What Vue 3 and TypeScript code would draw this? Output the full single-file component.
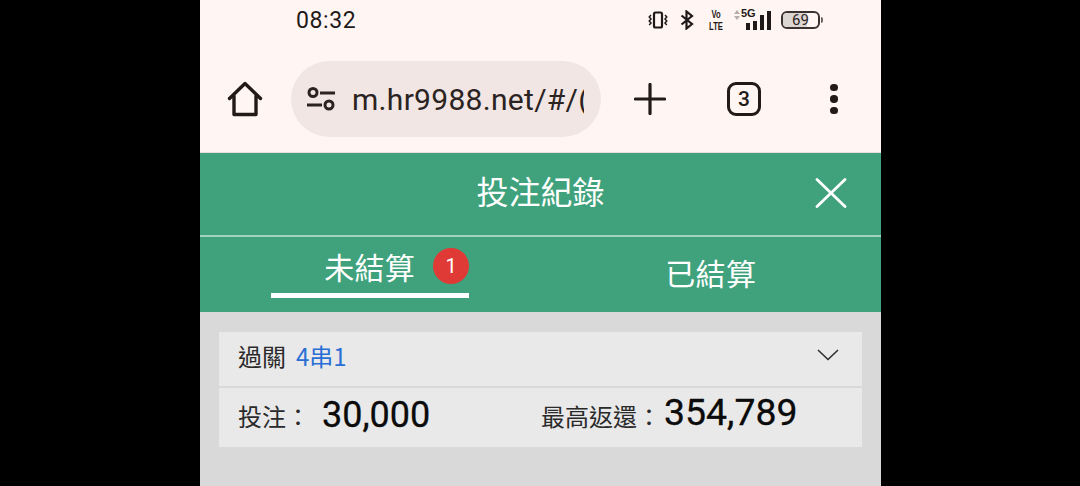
<template>
  <div class="stage">
    <div class="phone">
      <div class="status-bar">
        <span class="time">08:32</span>
        <div class="status-icons">
          <svg class="ic-vibrate" width="20" height="18" viewBox="0 0 20 18" fill="none" stroke="#1f1a19">
            <rect x="6" y="1.500" width="8" height="15" rx="1.500" stroke-width="2.200" />
            <path d="M3 4 1.200 6 3 8 1.200 10 3 12 1.200 14M17 4l1.800 2L17 8l1.800 2L17 12l1.800 2" stroke-width="1.500" />
          </svg>
          <svg class="ic-bt" width="14" height="20" viewBox="0 0 14 20" fill="none" stroke="#1f1a19" stroke-width="2.200">
            <path d="M1.500 5.500 12 14l-5.500 4.500v-17L12 6 1.500 14.500" />
          </svg>
          <div class="volte"><span>Vo</span><span>LTE</span></div>
          <div class="signal">
            <svg class="updown" width="6" height="10" viewBox="0 0 6 10" fill="#b5aeab">
              <path d="M3 0l3 4H0zM3 10 0 6h6z" />
            </svg>
            <span class="five-g">5G</span>
            <i class="bar b1"></i><i class="bar b2"></i><i class="bar b3"></i><i class="bar b4"></i>
          </div>
          <div class="battery">
            <div class="battery-body">
              <div class="battery-fill"></div>
              <span>69</span>
            </div>
            <i class="battery-tip"></i>
          </div>
        </div>
      </div>

      <div class="toolbar">
        <svg class="home" width="38" height="38" viewBox="0 0 38 38" fill="none" stroke="#221a18" stroke-width="3.400" stroke-linejoin="round" stroke-linecap="round">
          <path d="M3.500 18.500 19 3.500l15.500 15M8 15.500V34.500H30V15.500" />
        </svg>
        <div class="url-pill">
          <svg width="28" height="24" viewBox="0 0 28 24" fill="none" stroke="#2b2321" stroke-width="3">
            <circle cx="6" cy="5.500" r="4" />
            <path d="M13 6h15M0 18h15" />
            <circle cx="22" cy="18" r="4" />
          </svg>
          <span class="url">m.hr9988.net/#/(</span>
        </div>
        <div class="toolbar-actions">
          <svg width="32" height="32" viewBox="0 0 32 32" stroke="#221a18" stroke-width="3.200" stroke-linecap="round">
            <path d="M16 1.500v29M1.500 16h29" />
          </svg>
          <div class="tabs-count">3</div>
          <div class="dots"><i></i><i></i><i></i></div>
        </div>
      </div>

      <div class="green-head">
        <div class="title-row">
          <span class="title">投注紀錄</span>
          <svg class="close" width="32" height="30" viewBox="0 0 32 30" stroke="#fff" stroke-width="2.800" stroke-linecap="round">
            <path d="M2 1.500l28 27M30 1.500l-28 27" />
          </svg>
        </div>
        <div class="tab-row">
          <div class="tab-col">
            <div class="tab-active">
              <span>未結算</span>
              <b class="badge">1</b>
            </div>
          </div>
          <div class="tab-col">
            <span class="tab-other">已結算</span>
          </div>
        </div>
      </div>

      <div class="content">
        <div class="card">
          <div class="card-top">
            <span class="label label-top">過關</span>
            <span class="parlay">4串1</span>
            <svg class="chevron" width="22" height="12" viewBox="0 0 22 12" fill="none" stroke="#333" stroke-width="1.700" stroke-linecap="round" stroke-linejoin="round">
              <path d="M1.500 1.500 11 10.500l9.500-9" />
            </svg>
          </div>
          <div class="card-bottom">
            <div class="stake">
              <span class="label">投注：</span>
              <span class="num num-stake">{{ stake }}</span>
            </div>
            <div class="payout">
              <span class="label">最高返還：</span>
              <span class="num num-payout">{{ payout }}</span>
            </div>
          </div>
        </div>
      </div>
    </div>
  </div>
</template>

<script setup lang="ts">
const stake: string = '30,000'
const payout: string = '354,789'
</script>

<style>
html,
body {
  margin: 0;
  background: #000;
}
</style>

<style scoped>
.stage {
  width: 1080px;
  height: 486px;
  overflow: hidden;
  background: #000;
  padding-left: 200px;
  box-sizing: border-box;
  font-family: "Noto Sans CJK TC", Roboto, sans-serif;
}

.phone {
  width: 681px;
  height: 486px;
  background: #d9d9d9;
  display: flex;
  flex-direction: column;
}

.status-bar {
  height: 40px;
  flex: none;
  background: #fff6f3;
  display: flex;
  align-items: center;
  justify-content: space-between;
  padding: 0 58px 0 96px;
  color: #1f1a19;
}

.time {
  font-family: Roboto, sans-serif;
  font-size: 23px;
  letter-spacing: 0.6px;
}

.status-icons {
  display: flex;
  align-items: center;
}

.ic-bt {
  margin-left: 12px;
}

.volte {
  margin-left: 14px;
  display: flex;
  flex-direction: column;
  align-items: center;
  font-family: "Liberation Sans", sans-serif;
  font-weight: 700;
  font-size: 8.500px;
  line-height: 10px;
  width: 16px;
  transform: scale(0.9, 1.2);
}

.signal {
  margin-left: 10px;
  width: 37px;
  height: 20px;
  position: relative;
  display: flex;
  align-items: flex-end;
  justify-content: flex-end;
  gap: 3px;
}

.updown {
  position: absolute;
  left: 0;
  top: 0;
}

.five-g {
  position: absolute;
  left: 7px;
  top: -2px;
  font-family: "Liberation Sans", sans-serif;
  font-weight: 700;
  font-size: 11px;
  line-height: 11px;
}

.bar {
  width: 4px;
  background: #1f1a19;
}

.b1 { height: 7px; }
.b2 { height: 9px; }
.b3 { height: 15px; }
.b4 { height: 19px; }

.battery {
  margin-left: 10px;
  display: flex;
  align-items: center;
}

.battery-body {
  width: 39px;
  height: 18px;
  box-sizing: border-box;
  border: 2px solid #3a3230;
  border-radius: 6px;
  position: relative;
  display: flex;
  align-items: center;
  justify-content: center;
  overflow: hidden;
}

.battery-fill {
  position: absolute;
  left: 0;
  top: 0;
  bottom: 0;
  width: 69%;
  background: #dcd6d3;
}

.battery-body span {
  position: relative;
  font-family: Roboto, sans-serif;
  font-size: 15px;
  color: #2b2321;
}

.battery-tip {
  width: 2px;
  height: 6px;
  margin-left: 1px;
  background: #6b6361;
  border-radius: 0 2px 2px 0;
}

.toolbar {
  height: 113px;
  flex: none;
  box-sizing: border-box;
  border-bottom: 1px solid #e6dfdc;
  background: #fff6f3;
  display: flex;
  align-items: center;
  padding: 6px 0 0 26px;
}

.url-pill {
  margin-left: 27px;
  width: 310px;
  height: 76px;
  border-radius: 38px;
  background: #f1e6e3;
  display: flex;
  align-items: center;
  gap: 17px;
  padding-left: 16px;
  box-sizing: border-box;
}

.url {
  font-family: Roboto, sans-serif;
  font-size: 30px;
  color: #2b2321;
  letter-spacing: 0.3px;
  width: 232px;
  overflow: hidden;
  white-space: nowrap;
}

.toolbar-actions {
  display: flex;
  align-items: center;
  margin-left: 33px;
}

.tabs-count {
  margin-left: 61px;
  width: 34px;
  height: 34px;
  box-sizing: border-box;
  border: 3.500px solid #221a18;
  border-radius: 9px;
  display: flex;
  align-items: center;
  justify-content: center;
  font-family: Roboto, sans-serif;
  font-size: 21px;
  font-weight: 500;
  color: #221a18;
}

.dots {
  margin-left: 69px;
  display: flex;
  flex-direction: column;
  gap: 4px;
}

.dots i {
  width: 7.500px;
  height: 7.500px;
  border-radius: 50%;
  background: #221a18;
}

.green-head {
  height: 159px;
  flex: none;
  background: #3fa27d;
  color: #fff;
  display: flex;
  flex-direction: column;
}

.title-row {
  height: 82px;
  flex: none;
  border-bottom: 2px solid #a5d3c1;
  display: flex;
  align-items: center;
  justify-content: center;
  position: relative;
}

.title {
  font-size: 32px;
  line-height: 40px;
  margin-top: -8px;
}

.close {
  position: absolute;
  right: 34px;
  top: 25px;
}

.tab-row {
  flex: 1;
  display: grid;
  grid-template-columns: 1fr 1fr;
}

.tab-col {
  display: flex;
  align-items: center;
  justify-content: center;
  font-size: 30px;
}

.tab-active {
  width: 198px;
  height: 62px;
  margin-top: -16px;
  box-sizing: border-box;
  border-bottom: 5px solid #fff;
  padding: 4px 0 0 53px;
  display: flex;
  align-items: center;
  gap: 18px;
  letter-spacing: 0.3px;
}

.badge {
  width: 36px;
  height: 36px;
  border-radius: 50%;
  background: #e03a36;
  display: flex;
  align-items: center;
  justify-content: center;
  font-family: Roboto, sans-serif;
  font-size: 20px;
  font-weight: 400;
}

.tab-other {
  margin-top: -6px;
  letter-spacing: 0.3px;
}

.content {
  flex: 1;
  padding: 20px 19px 0;
}

.card {
  background: #e9e9e9;
  color: #2a2a2a;
}

.card-top {
  height: 56px;
  box-sizing: border-box;
  border-bottom: 2px solid #d9d9d9;
  display: flex;
  align-items: center;
  padding: 0 23px 0 19px;
}

.label {
  font-size: 24px;
  line-height: 32px;
  margin-top: -3px;
}

.label-top {
  margin-top: -7px;
}

.parlay {
  margin-left: 10px;
  margin-top: -7px;
  font-size: 24px;
  line-height: 32px;
  color: #2a6fd6;
}

.chevron {
  margin-left: auto;
  margin-bottom: 8px;
}

.card-bottom {
  height: 59px;
  display: flex;
  align-items: center;
  padding-left: 19px;
}

.stake {
  width: 303px;
  display: flex;
  align-items: center;
}

.payout {
  display: flex;
  align-items: center;
}

.num {
  font-family: Roboto, sans-serif;
  font-size: 36px;
  line-height: 44px;
  color: #0b0b0b;
  margin-top: -5px;
  -webkit-text-stroke: 0.3px #0b0b0b;
}

.num-stake {
  margin-left: 12px;
}

.num-payout {
  margin-top: -11px;
  margin-left: 3px;
  font-size: 37.400px;
}
</style>
